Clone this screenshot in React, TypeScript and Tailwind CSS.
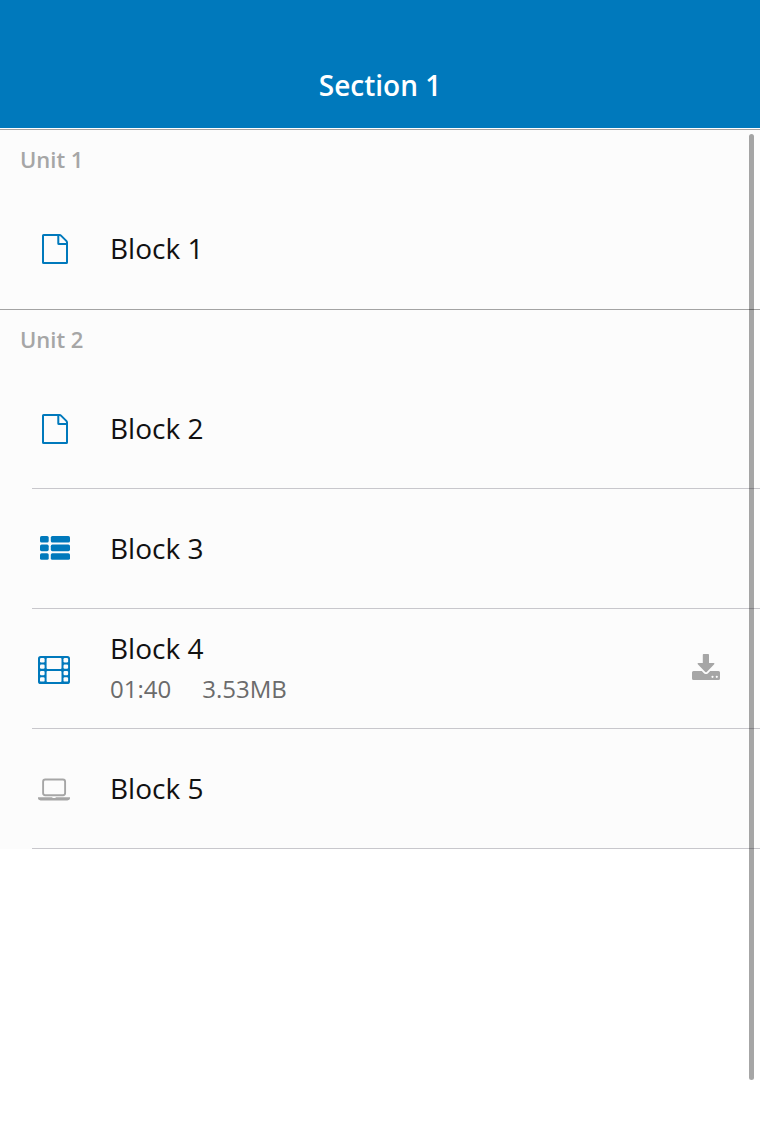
import type { ReactNode } from "react";

type Kind = "file" | "list" | "video" | "laptop";

interface Block {
  name: string;
  kind: Kind;
  muted?: boolean;
  duration?: string;
  size?: string;
}

interface Unit {
  name: string;
  blocks: Block[];
}

const units: Unit[] = [
  { name: "Unit 1", blocks: [{ name: "Block 1", kind: "file" }] },
  {
    name: "Unit 2",
    blocks: [
      { name: "Block 2", kind: "file" },
      { name: "Block 3", kind: "list" },
      { name: "Block 4", kind: "video", duration: "01:40", size: "3.53MB" },
      { name: "Block 5", kind: "laptop", muted: true },
    ],
  },
];

const filmHoles = [7.1, 13.5, 19.9, 26.3];
const listRows = [5, 13.6, 22.2];

const shapes: Record<Kind, ReactNode> = {
  file: (
    <path
      d="M5.6 4 H21.6 Q22.4 4 23 4.6 L28.3 9.9 Q29 10.6 29 11.4 V31.4 Q29 32 28.4 32 H5.6 Q5 32 5 31.4 V4.6 Q5 4 5.6 4 Z M20.3 4 V12.4 Q20.3 13 20.9 13 H29"
      fill="none"
      stroke="currentColor"
      strokeWidth="2"
    />
  ),
  list: (
    <g fill="currentColor">
      {listRows.map((y) => (
        <g key={y}>
          <rect x="2" y={y} width="8.7" height="6.6" rx="1.6" />
          <rect x="12.8" y={y} width="19.2" height="6.6" rx="1.6" />
        </g>
      ))}
    </g>
  ),
  video: (
    <g>
      <rect x="0" y="5" width="32" height="28" rx="2.6" fill="currentColor" />
      <g fill="#fcfcfc">
        <rect x="8.6" y="7" width="14.9" height="11" rx="0.9" />
        <rect x="8.6" y="20" width="14.9" height="11" rx="0.9" />
        {filmHoles.map((y) => (
          <g key={y}>
            <rect x="2" y={y} width="4.6" height="4.3" rx="1.2" />
            <rect x="25.5" y={y} width="4.6" height="4.3" rx="1.2" />
          </g>
        ))}
      </g>
    </g>
  ),
  laptop: (
    <g>
      <rect x="5.1" y="8.5" width="22" height="15.8" rx="2.2" fill="none" stroke="currentColor" strokeWidth="1.9" />
      <path
        d="M0 26.2 H14.4 V27.1 H17.6 V26.2 H32 V27.6 Q32 29.4 29.3 29.4 H2.7 Q0 29.4 0 27.6 Z"
        fill="currentColor"
      />
    </g>
  ),
};

function BlockIcon({ kind, muted }: { kind: Kind; muted?: boolean }) {
  return (
    <svg
      viewBox="0 0 32 36"
      aria-hidden="true"
      className={`h-9 w-8 shrink-0 ${muted ? "text-[#a6a6a6]" : "text-[#0079bc]"}`}
    >
      {shapes[kind]}
    </svg>
  );
}

function DownloadIcon() {
  return (
    <svg viewBox="0 0 28 26" aria-hidden="true" className="h-[26px] w-7">
      <path
        fill="currentColor"
        fillRule="evenodd"
        d="M11.6 0 H16.2 Q17 0 17 0.8 V9 H21.6 Q23 9 22.2 10.2 L14.7 18 Q14 18.6 13.3 18 L5.8 10.2 Q5 9 6.4 9 H10.8 V0.8 Q10.8 0 11.6 0 Z M1.5 17 H9.8 L12.2 19.4 Q14 20.8 15.8 19.4 L18.2 17 H26.5 Q28 17 28 18.5 V24.5 Q28 26 26.5 26 H1.5 Q0 26 0 24.5 V18.5 Q0 17 1.5 17 Z M20.5 21.7 a1.1 1.1 0 1 0 0 2.2 a1.1 1.1 0 1 0 0 -2.2 Z M24.8 21.7 a1.1 1.1 0 1 0 0 2.2 a1.1 1.1 0 1 0 0 -2.2 Z"
      />
    </svg>
  );
}

function BlockRow({ block }: { block: Block }) {
  return (
    <li className="group flex h-[120px] pl-8">
      <div className="flex flex-1 items-center border-b border-[#c8c7cc] pl-1.5 group-only:border-transparent">
        <BlockIcon kind={block.kind} muted={block.muted} />
        <div className="flex flex-1 flex-col pl-10">
          <a href="#" className="pb-0.5 text-[28px] leading-10 text-[#111111]">
            {block.name}
          </a>
          {block.size && (
            <p className="flex gap-[31px] pb-0.5 text-2xl leading-[38px] text-[#6b6b6b]">
              <span>{block.duration}</span>
              <span>{block.size}</span>
            </p>
          )}
        </div>
        {block.size && (
          <button type="button" aria-label={`Download ${block.name}`} className="mr-10 pb-1 text-[#a6a6a6]">
            <DownloadIcon />
          </button>
        )}
      </div>
    </li>
  );
}

export default function App() {
  return (
    <div className="relative flex min-h-screen flex-col bg-white font-['Open_Sans','Noto_Sans',sans-serif]">
      <header className="flex h-32 items-center justify-center bg-[#0079bc] pt-[42px]">
        <h1 className="text-[28px] leading-10 font-semibold text-white">Section 1</h1>
      </header>
      <main className="pt-px">
        {units.map((unit) => (
          <section key={unit.name} className="bg-[#fcfcfc]">
            <h2 className="flex h-[60px] items-center border-t border-[#a3a3a3] px-5 text-[22px] font-semibold text-[#a6a6a6]">
              {unit.name}
            </h2>
            <ul>
              {unit.blocks.map((block) => (
                <BlockRow key={block.name} block={block} />
              ))}
            </ul>
          </section>
        ))}
      </main>
      <div aria-hidden="true" className="absolute top-[134px] right-1.5 bottom-14 w-[5px] rounded-full bg-black/35" />
    </div>
  );
}
